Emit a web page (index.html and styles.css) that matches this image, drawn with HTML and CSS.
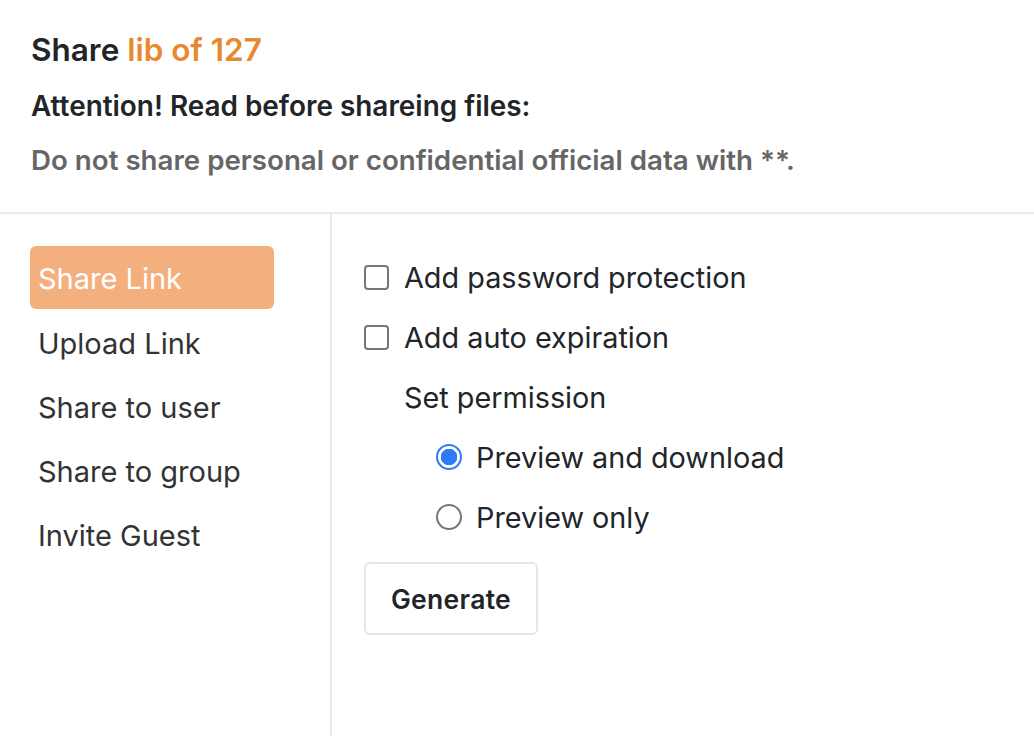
FILE: index.html
```html
<!DOCTYPE html>
<html lang="en">
<head>
<meta charset="utf-8">
<title>Share lib of 127</title>
<link rel="stylesheet" href="styles.css">
</head>
<body>
<div class="dialog">
  <header class="dlg-header">
    <h1 class="dlg-title">Share <span class="lib-name">lib of 127</span></h1>
    <p class="notice-title">Attention! Read before shareing files:</p>
    <p class="notice-text">Do not share personal or confidential official data with **.</p>
  </header>
  <div class="dlg-body">
    <nav class="side-nav">
      <a class="nav-item active">Share Link</a>
      <a class="nav-item">Upload Link</a>
      <a class="nav-item">Share to user</a>
      <a class="nav-item">Share to group</a>
      <a class="nav-item">Invite Guest</a>
    </nav>
    <main class="panel">
      <label class="opt">
        <span class="checkbox"></span>
        <span>Add password protection</span>
      </label>
      <label class="opt">
        <span class="checkbox"></span>
        <span>Add auto expiration</span>
      </label>
      <div class="perm-label">Set permission</div>
      <label class="opt radio-opt">
        <span class="radio checked"></span>
        <span>Preview and download</span>
      </label>
      <label class="opt radio-opt">
        <span class="radio"></span>
        <span>Preview only</span>
      </label>
      <button class="btn-generate" type="button">Generate</button>
    </main>
  </div>
</div>
</body>
</html>
```

FILE: styles.css
```css
* { box-sizing: border-box; }
html, body {
  margin: 0;
  padding: 0;
  background: #fff;
}
body {
  font-family: Inter, "Noto Sans", sans-serif;
  color: #212529;
  width: 1034px;
  height: 736px;
  overflow: hidden;
}
.dialog {
  display: flex;
  flex-direction: column;
  height: 100%;
}
.dlg-header {
  padding: 30px 31px 0;
  height: 214px;
  border-bottom: 2px solid #e9ecef;
}
.dlg-title {
  margin: 0;
  font-size: 31.5px;
  font-weight: 600;
  line-height: 40px;
  color: #212529;
}
.lib-name { color: #e8892f; }
.notice-title {
  margin: 20px 0 0;
  font-size: 27.9px;
  font-weight: 600;
  line-height: 32px;
  color: #212529;
}
.notice-text {
  margin: 22px 0 0;
  font-size: 27.7px;
  font-weight: 600;
  line-height: 32px;
  color: #666;
}
.dlg-body {
  display: flex;
  flex: 1;
}
.side-nav {
  width: 332px;
  border-right: 2px solid #e9ecef;
  padding: 32px 56px 0 30px;
  display: flex;
  flex-direction: column;
}
.nav-item {
  display: block;
  height: 64px;
  line-height: 68px;
  padding-left: 8px;
  font-size: 29px;
  color: #333;
  border-radius: 6px;
}
.nav-item.active {
  background: #f3af7d;
  color: #fff;
  height: 63px;
  line-height: 65px;
  margin-bottom: 1px;
}
.panel {
  padding: 33px 0 0 32px;
  display: flex;
  flex-direction: column;
  align-items: flex-start;
}
.opt {
  display: flex;
  align-items: center;
  height: 60px;
  font-size: 28.8px;
  color: #212529;
}
.checkbox {
  width: 25px;
  height: 25px;
  border: 2px solid #767676;
  border-radius: 4px;
  margin-right: 15px;
  flex: none;
}
.perm-label {
  height: 60px;
  line-height: 62px;
  padding-left: 40px;
  font-size: 28.8px;
}
.radio-opt { padding-left: 72px; }
.radio {
  width: 26px;
  height: 26px;
  border: 2px solid #767676;
  border-radius: 50%;
  margin-right: 14px;
  flex: none;
}
.radio.checked {
  border-color: #2f7bf5;
  background: radial-gradient(circle, #2f7bf5 0 8px, #fff 8.5px);
}
.btn-generate {
  margin-top: 15px;
  width: 174px;
  height: 73px;
  border: 2px solid #e2e5ea;
  border-radius: 6px;
  background: #fff;
  font-family: inherit;
  font-size: 26.5px;
  font-weight: 600;
  color: #212529;
  letter-spacing: 0.3px;
}
```
